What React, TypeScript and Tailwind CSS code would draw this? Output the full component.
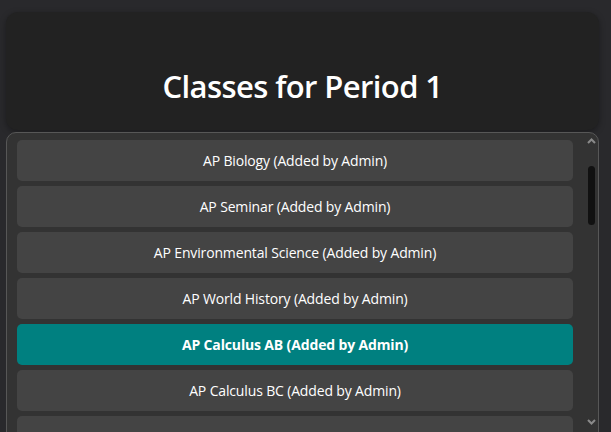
import React from "react";

const classes = [
  { name: "AP Biology", selected: false },
  { name: "AP Seminar", selected: false },
  { name: "AP Environmental Science", selected: false },
  { name: "AP World History", selected: false },
  { name: "AP Calculus AB", selected: true },
  { name: "AP Calculus BC", selected: false },
];

export default function App() {
  return (
    <div
      className="h-[432px] w-full overflow-hidden bg-[#29292c] pl-[6px] pr-[12px] pt-[12px] text-white"
      style={{ fontFamily: '"Open Sans", "Noto Sans", sans-serif' }}
    >
      {/* Header */}
      <div className="flex h-[118px] items-end justify-center rounded-[12px] bg-[#222222] pb-[20px] shadow-[0_2px_6px_rgba(0,0,0,0.35)]">
        <h1 className="text-[31px] font-semibold leading-[48px] tracking-[-0.6px]">
          Classes for Period 1
        </h1>
      </div>

      {/* List */}
      <div className="mt-[2px] flex h-[320px] overflow-hidden rounded-t-[10px] border border-[#575757] bg-[#333333]">
        <div className="flex flex-1 flex-col gap-[5px] pl-[10px] pr-[11px] pt-[7px]">
          {classes.map((c, i) => (
            <div
              key={i}
              className={
                c.selected
                  ? "flex h-[41px] shrink-0 items-center justify-center rounded-[5px] bg-[#008080] text-[14px] font-bold tracking-[-0.15px]"
                  : "flex h-[41px] shrink-0 items-center justify-center rounded-[5px] bg-[#444444] text-[14px] tracking-[-0.15px]"
              }
            >
              {c.name} (Added by Admin)
            </div>
          ))}
          <div className="h-[41px] shrink-0 rounded-[5px] bg-[#444444]" />
        </div>

        {/* Scrollbar */}
        <div className="flex w-[14px] shrink-0 flex-col items-center">
          <svg width="9" height="6" viewBox="0 0 9 6" className="mt-[5px]">
            <path d="M1 5 L4.5 1.5 L8 5" stroke="#8a8a8a" strokeWidth="2" fill="none" />
          </svg>
          <div className="mt-[22px] h-[59px] w-[7px] rounded-full bg-[#111111]" />
          <div className="flex-1" />
          <svg width="9" height="6" viewBox="0 0 9 6" className="mb-[26px]">
            <path d="M1 1 L4.5 4.5 L8 1" stroke="#8a8a8a" strokeWidth="2" fill="none" />
          </svg>
        </div>
      </div>
    </div>
  );
}
